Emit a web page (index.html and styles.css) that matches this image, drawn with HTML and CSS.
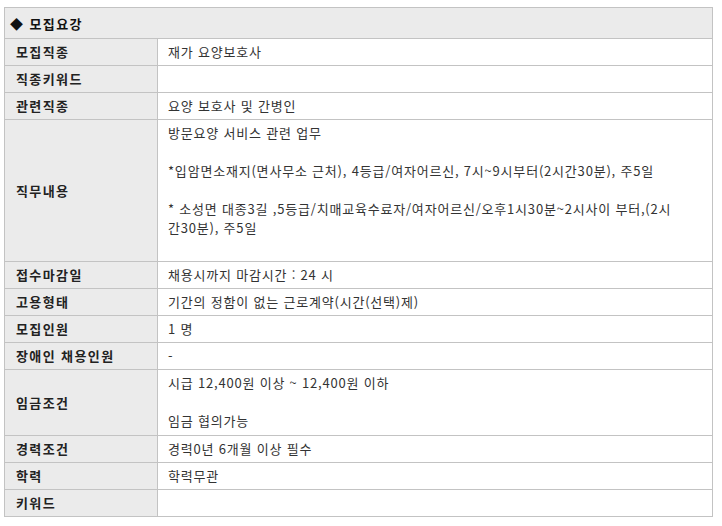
FILE: index.html
```html
<!DOCTYPE html>
<html lang="ko">
<head>
<meta charset="utf-8">
<title>모집요강</title>
<link rel="stylesheet" href="styles.css">
</head>
<body>
<div class="wrap">
<table class="info">
  <colgroup><col class="col-label"><col class="col-value"></colgroup>
  <tr class="head"><th colspan="2">◆ 모집요강</th></tr>
  <tr><th>모집직종</th><td>재가 요양보호사</td></tr>
  <tr><th>직종키워드</th><td></td></tr>
  <tr><th>관련직종</th><td>요양 보호사 및 간병인</td></tr>
  <tr class="job"><th>직무내용</th><td class="multi">방문요양 서비스 관련 업무<br><br>*입암면소재지(면사무소 근처), 4등급/여자어르신, 7시~9시부터(2시간30분), 주5일<br><br>* 소성면 대종3길 ,5등급/치매교육수료자/여자어르신/오후1시30분~2시사이 부터,(2시<br>간30분), 주5일<br><br></td></tr>
  <tr><th>접수마감일</th><td>채용시까지 마감시간 : 24 시</td></tr>
  <tr><th>고용형태</th><td>기간의 정함이 없는 근로계약(시간(선택)제)</td></tr>
  <tr><th>모집인원</th><td>1 명</td></tr>
  <tr><th>장애인 채용인원</th><td>-</td></tr>
  <tr class="pay"><th>임금조건</th><td class="multi">시급 12,400원 이상 ~ 12,400원 이하<br><br>임금 협의가능</td></tr>
  <tr><th>경력조건</th><td>경력0년 6개월 이상 필수</td></tr>
  <tr><th>학력</th><td>학력무관</td></tr>
  <tr><th>키워드</th><td></td></tr>
</table>
</div>
</body>
</html>
```
FILE: styles.css
```css
html, body {
  margin: 0;
  padding: 0;
  background: #ffffff;
}
.wrap {
  padding: 7px 0 0 4px;
}
.info {
  width: 709px;
  border-collapse: collapse;
  table-layout: fixed;
  font-family: "Noto Sans CJK KR", "Noto Sans", sans-serif;
  font-size: 13px;
  line-height: 19px;
  color: #333333;
}
.col-label {
  width: 153px;
}
.info th, .info td {
  border: 1px solid #c3c3c3;
  padding: 3px 10px 4px 10px;
  vertical-align: middle;
  text-align: left;
  height: 19px;
}
.info td {
  letter-spacing: 0.8px;
  font-weight: 400;
  color: #333333;
}
.info th {
  padding-left: 11px;
  background: #ebebeb;
  font-size: 13px;
  font-weight: 700;
  letter-spacing: 1.4px;
  color: #222222;
}
.info .head th {
  height: 20px;
  padding: 5px 5px 5px 5px;
  background: #ebebeb;
  color: #111111;
}
.info td.multi {
  white-space: nowrap;
}
.info .job td {
  padding-bottom: 5px;
}
.info .pay td {
  padding-bottom: 5px;
}
```
